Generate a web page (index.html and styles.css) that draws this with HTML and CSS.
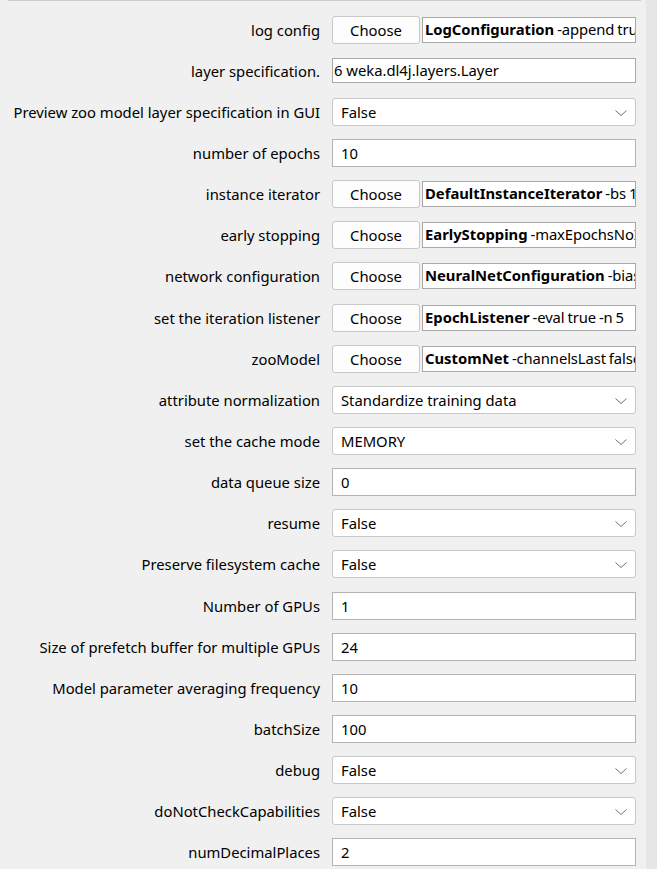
FILE: index.html
```html
<!DOCTYPE html>
<html>
<head>
<meta charset="utf-8">
<link rel="stylesheet" href="styles.css">
</head>
<body>
<div class="page">
  <div class="main">
    <div class="topbox"></div>
    <div class="form">
      <div class="label">log config</div>
      <div class="chooser"><button class="choose">Choose</button><div class="objfield"><b>LogConfiguration</b> -append true -logFile weka.log</div></div>

      <div class="label">layer specification.</div>
      <div class="ctl"><div class="arrayfield">6 weka.dl4j.layers.Layer</div></div>

      <div class="label">Preview zoo model layer specification in GUI</div>
      <div class="ctl"><div class="select">False<svg class="chev" viewBox="0 0 12 6"><polyline points="0.5,0.5 6,5.5 11.5,0.5"/></svg></div></div>

      <div class="label">number of epochs</div>
      <div class="ctl"><div class="text">10</div></div>

      <div class="label">instance iterator</div>
      <div class="chooser"><button class="choose">Choose</button><div class="objfield"><b>DefaultInstanceIterator</b> -bs 1</div></div>

      <div class="label">early stopping</div>
      <div class="chooser"><button class="choose">Choose</button><div class="objfield"><b>EarlyStopping</b> -maxEpochsNoImprovement 0</div></div>

      <div class="label">network configuration</div>
      <div class="chooser"><button class="choose">Choose</button><div class="objfield"><b>NeuralNetConfiguration</b> -biasInit 0.0</div></div>

      <div class="label">set the iteration listener</div>
      <div class="chooser"><button class="choose">Choose</button><div class="objfield"><b>EpochListener</b> -eval true -n 5</div></div>

      <div class="label">zooModel</div>
      <div class="chooser"><button class="choose">Choose</button><div class="objfield"><b>CustomNet</b> -channelsLast false</div></div>

      <div class="label">attribute normalization</div>
      <div class="ctl"><div class="select">Standardize training data<svg class="chev" viewBox="0 0 12 6"><polyline points="0.5,0.5 6,5.5 11.5,0.5"/></svg></div></div>

      <div class="label">set the cache mode</div>
      <div class="ctl"><div class="select">MEMORY<svg class="chev" viewBox="0 0 12 6"><polyline points="0.5,0.5 6,5.5 11.5,0.5"/></svg></div></div>

      <div class="label">data queue size</div>
      <div class="ctl"><div class="text">0</div></div>

      <div class="label">resume</div>
      <div class="ctl"><div class="select">False<svg class="chev" viewBox="0 0 12 6"><polyline points="0.5,0.5 6,5.5 11.5,0.5"/></svg></div></div>

      <div class="label">Preserve filesystem cache</div>
      <div class="ctl"><div class="select">False<svg class="chev" viewBox="0 0 12 6"><polyline points="0.5,0.5 6,5.5 11.5,0.5"/></svg></div></div>

      <div class="label">Number of GPUs</div>
      <div class="ctl"><div class="text">1</div></div>

      <div class="label">Size of prefetch buffer for multiple GPUs</div>
      <div class="ctl"><div class="text">24</div></div>

      <div class="label">Model parameter averaging frequency</div>
      <div class="ctl"><div class="text">10</div></div>

      <div class="label">batchSize</div>
      <div class="ctl"><div class="text">100</div></div>

      <div class="label">debug</div>
      <div class="ctl"><div class="select">False<svg class="chev" viewBox="0 0 12 6"><polyline points="0.5,0.5 6,5.5 11.5,0.5"/></svg></div></div>

      <div class="label">doNotCheckCapabilities</div>
      <div class="ctl"><div class="select">False<svg class="chev" viewBox="0 0 12 6"><polyline points="0.5,0.5 6,5.5 11.5,0.5"/></svg></div></div>

      <div class="label">numDecimalPlaces</div>
      <div class="ctl"><div class="text">2</div></div>
    </div>
  </div>
  <div class="scrollstrip"></div>
</div>
</body>
</html>
```

FILE: styles.css
```css
html, body {
  margin: 0;
  padding: 0;
  background: #f0f0f0;
}
body {
  font-family: "Noto Sans", "Open Sans", sans-serif;
  font-size: 14.8px;
  color: #000;
  overflow: hidden;
}
.page {
  display: flex;
  width: 657px;
  height: 869px;
  overflow: hidden;
}
.main {
  flex: 1;
  display: flex;
  flex-direction: column;
}
.topbox {
  margin-left: 8px;
  margin-right: 5px;
  height: 1px;
  border-left: 1px solid #d4d4d4;
  border-right: 1px solid #d4d4d4;
  border-bottom: 1px solid #cbcbcb;
}
.scrollstrip {
  width: 11px;
  background: #e6e6e6;
}
.form {
  display: grid;
  grid-template-columns: 320px 304px;
  column-gap: 12px;
  grid-auto-rows: 41.15px;
  padding-top: 8px;
  align-items: center;
}
.label {
  text-align: right;
  white-space: nowrap;
  line-height: 20px;
}
.ctl, .chooser {
  display: flex;
  align-items: center;
}
.chooser {
  gap: 2px;
}
.choose {
  width: 88px;
  height: 28px;
  box-sizing: border-box;
  background: #fdfdfd;
  border: 1px solid #c8c8c8;
  border-radius: 3px;
  font-family: inherit;
  font-size: 14.8px;
  color: #000;
  padding: 0;
  flex: none;
}
.objfield {
  flex: 1;
  height: 26px;
  box-sizing: border-box;
  border: 1px solid #a8a8a8;
  background: #fff;
  white-space: nowrap;
  overflow: hidden;
  padding: 0 2px;
  line-height: 23px;
  word-spacing: -0.8px;
  letter-spacing: -0.1px;
}
.objfield b {
  font-weight: 700;
  letter-spacing: 0;
}
.arrayfield {
  flex: 1;
  height: 25px;
  box-sizing: border-box;
  border: 1px solid #a8a8a8;
  background: #fff;
  white-space: nowrap;
  overflow: hidden;
  padding: 0 1px;
  line-height: 23px;
}
.text {
  flex: 1;
  height: 28px;
  box-sizing: border-box;
  border: 1px solid #b4b4b4;
  background: #fff;
  padding: 0 8px;
  line-height: 26px;
}
.select {
  flex: 1;
  height: 28px;
  box-sizing: border-box;
  border: 1px solid #c8c8c8;
  border-radius: 3px;
  background: #fff;
  padding: 0 8px;
  line-height: 26px;
  position: relative;
}
.chev {
  position: absolute;
  right: 8px;
  top: 11px;
  width: 12px;
  height: 6px;
  fill: none;
  stroke: #707070;
  stroke-width: 1;
}
```
